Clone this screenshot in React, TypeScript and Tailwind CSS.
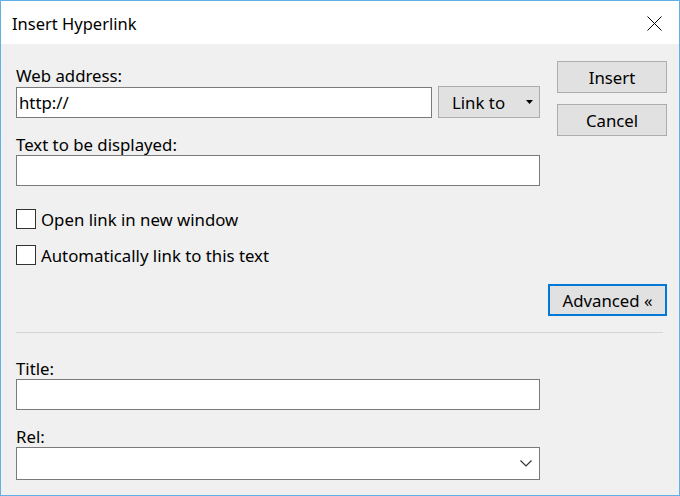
import React from "react";

const font = { fontFamily: '"Noto Sans", "Open Sans", sans-serif' };

export default function App() {
  return (
    <div
      className="w-[680px] h-[496px] border border-[#62b0e8] bg-[#f0f0f0] flex flex-col text-[16.8px] leading-[21px] text-black overflow-hidden"
      style={font}
    >
      {/* Title bar */}
      <div className="h-[43px] bg-white flex items-center justify-between pl-[11px] pr-[17px] shrink-0">
        <span className="text-[16.5px] pt-[2px]">Insert Hyperlink</span>
        <svg width="15" height="15" viewBox="0 0 15 15" className="mt-[1px]">
          <path d="M0.5 0.5 L14.5 14.5 M14.5 0.5 L0.5 14.5" stroke="#000" strokeWidth="1" fill="none" />
        </svg>
      </div>

      {/* Body */}
      <div className="flex flex-col pl-[15px] pr-[12px]">
        <div className="flex">
          {/* Left column */}
          <div className="w-[524px] flex flex-col pt-[21px]">
            <label className="h-[21px]">Web address:</label>
            <div className="flex items-end gap-[6px] h-[32px]">
              <div className="w-[416px] h-[31px] bg-white border border-[#7a7a7a] flex items-center px-[2px]">
                http://
              </div>
              <div className="w-[102px] h-[32px] bg-[#e1e1e1] border border-[#adadad] flex items-center justify-between pl-[13px] pr-[6px]">
                <span>Link to</span>
                <svg width="7" height="4" viewBox="0 0 7 4">
                  <path d="M0 0 H7 L3.5 4 Z" fill="#000" />
                </svg>
              </div>
            </div>
            <label className="h-[21px] mt-[16px]">Text to be displayed:</label>
            <div className="w-[524px] h-[31px] bg-white border border-[#7a7a7a]" />

            <div className="flex items-center mt-[23px] h-[20px]">
              <div className="w-[20px] h-[20px] bg-white border border-[#333333] shrink-0" />
              <span className="ml-[5px]">Open link in new window</span>
            </div>
            <div className="flex items-center mt-[16px] h-[20px]">
              <div className="w-[20px] h-[20px] bg-white border border-[#333333] shrink-0" />
              <span className="ml-[5px]">Automatically link to this text</span>
            </div>
          </div>

          {/* Right column */}
          <div className="flex flex-col ml-[17px] pt-[17px] gap-[11px]">
            <div className="w-[110px] h-[32px] bg-[#e1e1e1] border border-[#adadad] flex items-center justify-center">
              Insert
            </div>
            <div className="w-[110px] h-[32px] bg-[#e1e1e1] border border-[#adadad] flex items-center justify-center">
              Cancel
            </div>
          </div>
        </div>

        <div className="flex justify-end mt-[19px]">
          <div className="w-[119px] h-[32px] bg-[#e1e1e1] border-2 border-[#0078d7] flex items-center justify-center">
            Advanced «
          </div>
        </div>

        <div className="h-px bg-[#d5d5d5] mt-[16px] mr-[4px]" />

        <label className="h-[21px] mt-[25px]">Title:</label>
        <div className="w-[524px] h-[31px] bg-white border border-[#7a7a7a]" />

        <label className="h-[21px] mt-[16px]">Rel:</label>
        <div className="w-[524px] h-[33px] bg-white border border-[#7a7a7a] flex items-center justify-end pr-[7px]">
          <svg width="12" height="7" viewBox="0 0 12 7">
            <path d="M0.5 0.5 L6 6 L11.5 0.5" stroke="#333" strokeWidth="1.2" fill="none" />
          </svg>
        </div>
      </div>
    </div>
  );
}
